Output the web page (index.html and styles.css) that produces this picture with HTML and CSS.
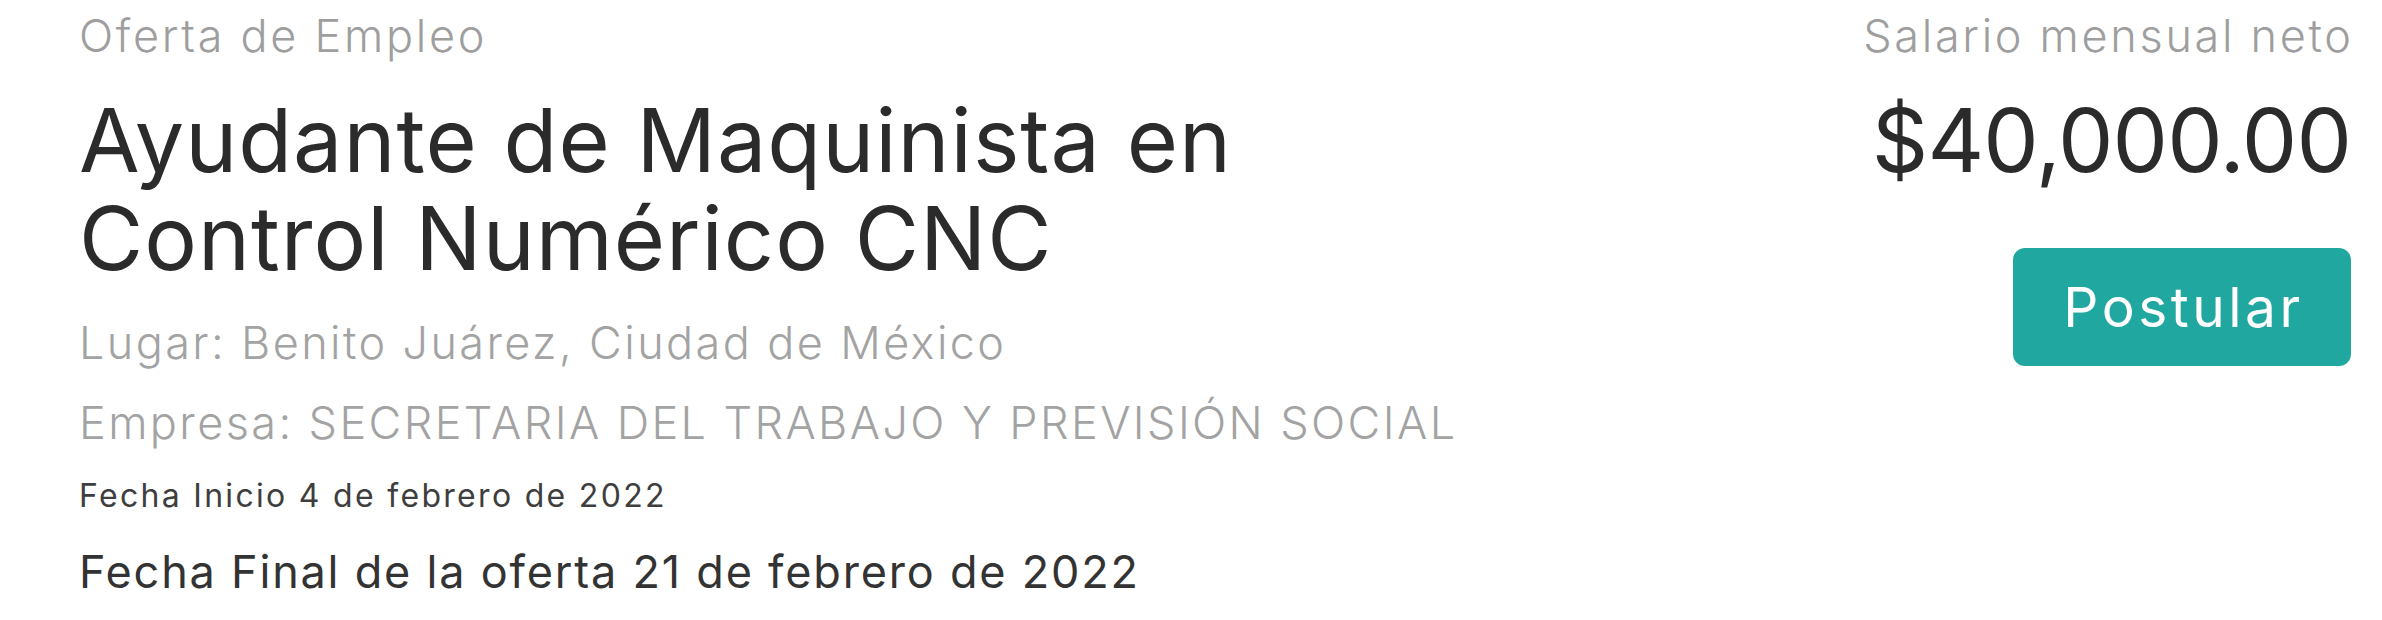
FILE: index.html
```html
<!DOCTYPE html>
<html lang="es">
<head>
<meta charset="utf-8">
<title>Oferta de Empleo</title>
<link rel="stylesheet" href="styles.css">
</head>
<body>
<main class="offer">
  <section class="offer-info">
    <p class="eyebrow">Oferta de Empleo</p>
    <h1 class="title">Ayudante de Maquinista en Control Numérico CNC</h1>
    <p class="meta">Lugar: Benito Juárez, Ciudad de México</p>
    <p class="meta">Empresa: SECRETARIA DEL TRABAJO Y PREVISIÓN SOCIAL</p>
    <p class="date-start">Fecha Inicio 4 de febrero de 2022</p>
    <p class="date-end">Fecha Final de la oferta 21 de febrero de 2022</p>
  </section>
  <aside class="offer-salary">
    <p class="eyebrow eyebrow-right">Salario mensual neto</p>
    <p class="amount">$40,000.00</p>
    <button class="apply" type="button">Postular</button>
  </aside>
</main>
</body>
</html>
```

FILE: styles.css
```css
* { box-sizing: border-box; }
html, body { margin: 0; padding: 0; background: #ffffff; }
body { font-family: Inter, "Noto Sans", sans-serif; }
.offer {
  display: flex;
  justify-content: space-between;
  align-items: flex-start;
  padding: 6px 31px 0 79px;
  width: 2382px;
}
.offer-info { display: flex; flex-direction: column; }
.offer-salary { display: flex; flex-direction: column; align-items: flex-end; }
p, h1 { margin: 0; }
.eyebrow {
  font-size: 45px;
  line-height: 60px;
  font-weight: 300;
  letter-spacing: 2.7px;
  color: #9e9e9e;
}
.eyebrow-right { margin-right: -2.7px; }
.title {
  margin-top: 25px;
  font-size: 88px;
  line-height: 98px;
  font-weight: 400;
  letter-spacing: 1px;
  color: #2b2b2b;
  max-width: 1260px;
}
.meta {
  font-size: 45px;
  line-height: 80px;
  font-weight: 300;
  letter-spacing: 2.4px;
  color: #a3a3a3;
}
.title + .meta { margin-top: 16px; }
.date-start {
  font-size: 32px;
  line-height: 66px;
  font-weight: 400;
  letter-spacing: 2.3px;
  color: #3e3e3e;
}
.date-end {
  font-size: 45px;
  line-height: 86px;
  font-weight: 400;
  letter-spacing: 1.8px;
  color: #333333;
}
.amount {
  margin-top: 25px;
  font-size: 88px;
  line-height: 98px;
  font-weight: 400;
  letter-spacing: -0.9px;
  color: #2b2b2b;
}
.apply {
  margin-top: 59px;
  width: 338px;
  height: 118px;
  padding: 0 0 0 3px;
  border: none;
  border-radius: 12px;
  background: #20a8a0;
  color: #ffffff;
  font-family: inherit;
  font-size: 55px;
  font-weight: 400;
  letter-spacing: 3.5px;
  cursor: pointer;
}
```
